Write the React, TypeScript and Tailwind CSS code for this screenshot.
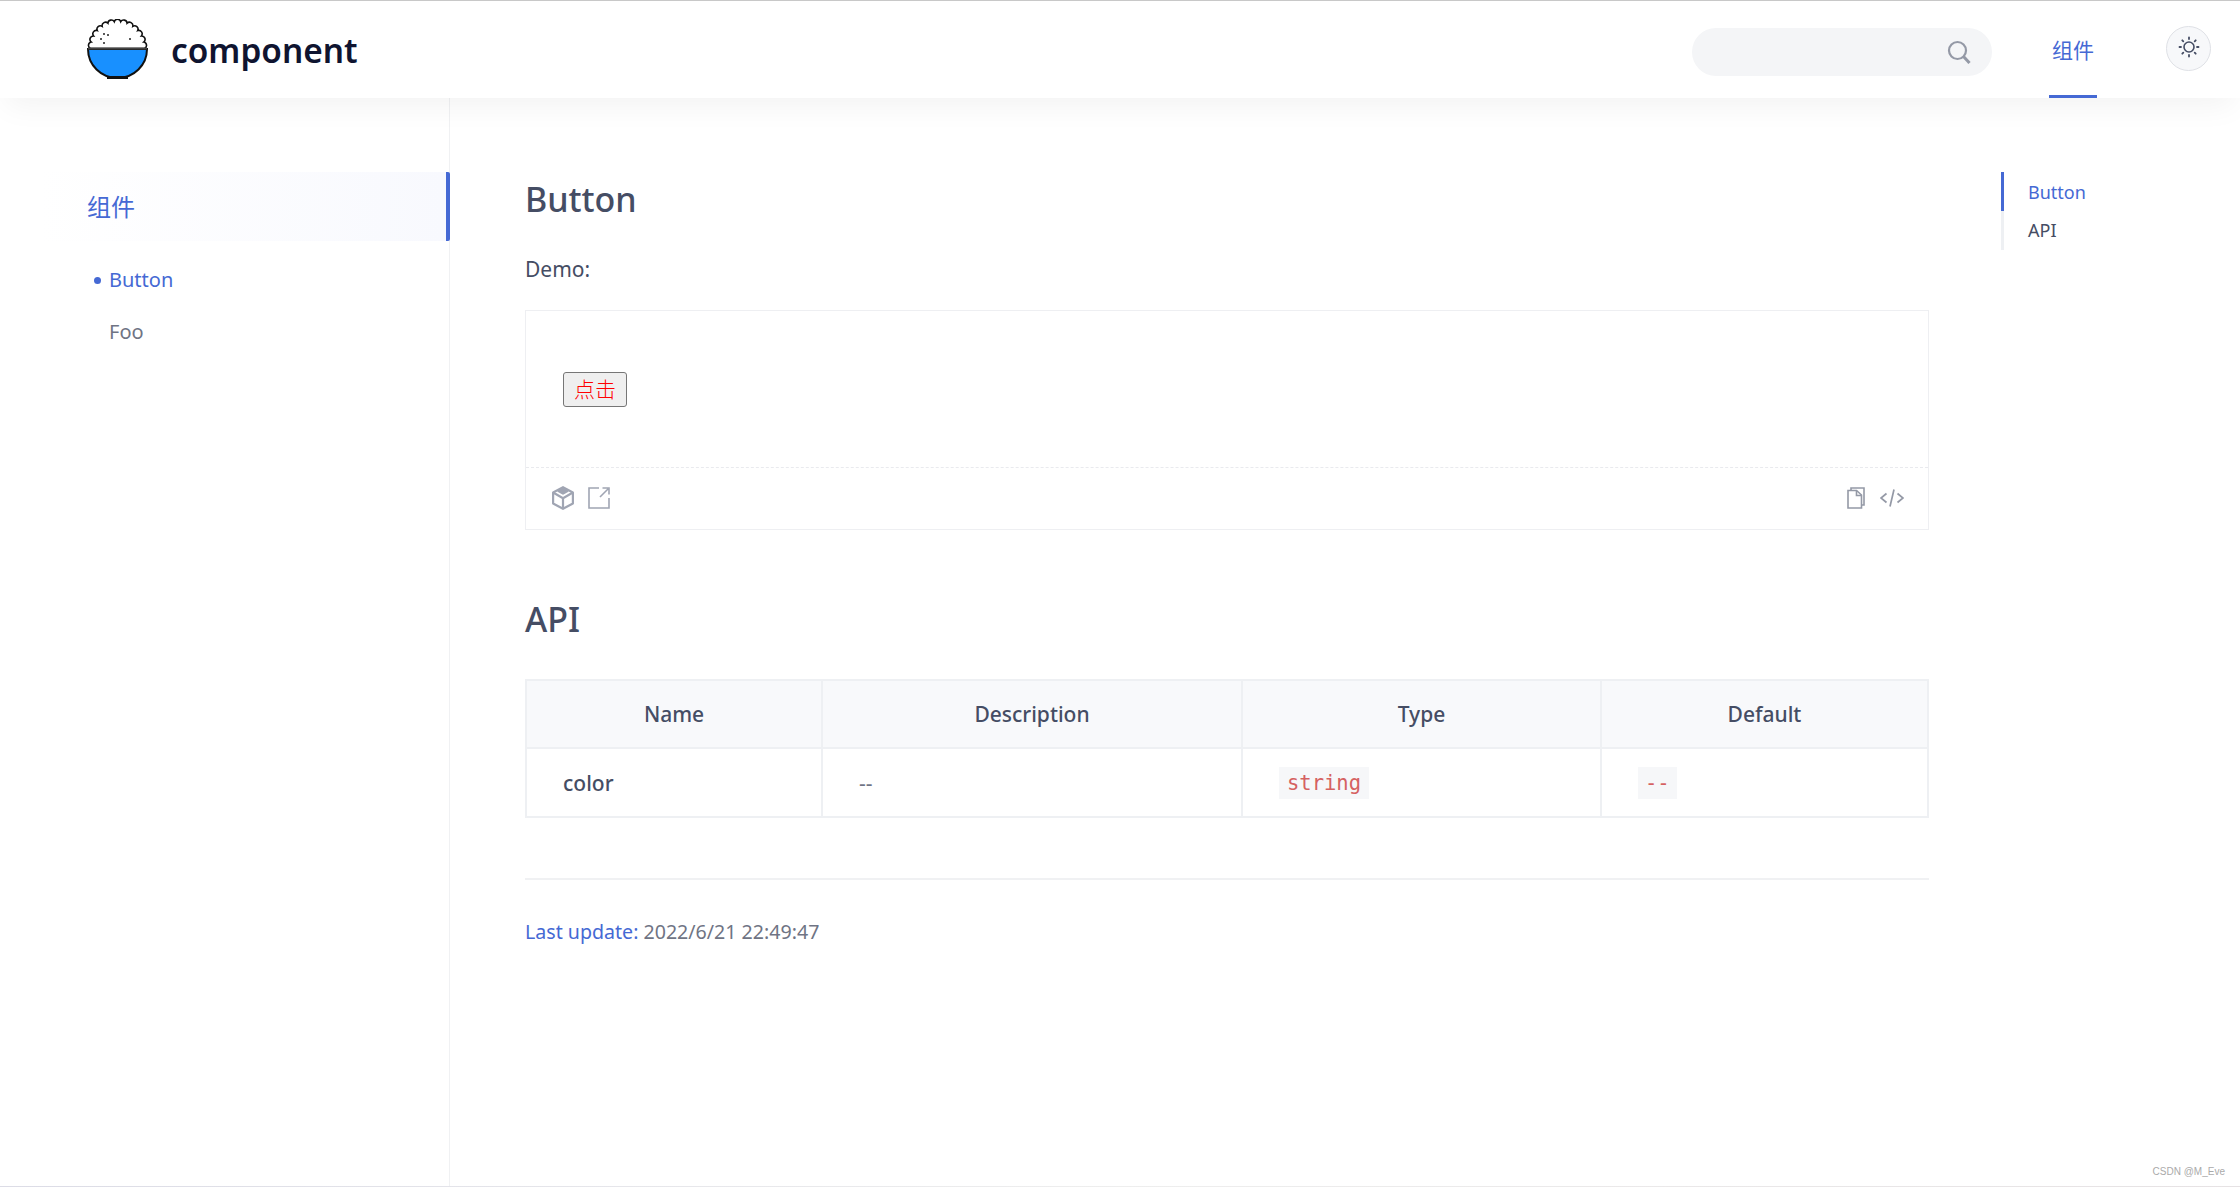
import React from 'react';

const FONT = "font-['Noto_Sans','Noto_Sans_CJK_SC',sans-serif]";

// scalloped rice outline for the logo
const ricePath = () => {
  const cx = 30.5;
  const cy = 29.5;
  const r = 27;
  const n = 13;
  let d = `M${cx - r} ${cy}`;
  for (let i = 1; i <= n; i++) {
    const a = Math.PI - (Math.PI * i) / n;
    const x = cx + r * Math.cos(a);
    const y = cy - r * Math.sin(a);
    d += ` A3.4 3.4 0 0 1 ${x.toFixed(2)} ${y.toFixed(2)}`;
  }
  return d + ' Z';
};

const Logo = () => (
  <svg width="61" height="61" viewBox="0 0 61 61" className="shrink-0">
    <path d={ricePath()} fill="#fff" stroke="#111" strokeWidth="1.6" />
    <path d="M1 30 H60 C60 46 47 59 30.5 59 C14 59 1 46 1 30 Z" fill="#1890ff" stroke="#111" strokeWidth="2" />
    <line x1="1" y1="29.5" x2="60" y2="29.5" stroke="#444" strokeWidth="2" />
    <rect x="20" y="57" width="21" height="3" fill="#111" />
    <circle cx="14" cy="20" r="1" fill="#222" />
    <circle cx="17" cy="15" r="1" fill="#222" />
    <circle cx="21" cy="16" r="1" fill="#222" />
    <circle cx="17" cy="24" r="1" fill="#222" />
    <circle cx="43" cy="20" r="1" fill="#222" />
  </svg>
);

const SearchIcon = () => (
  <svg width="24" height="24" viewBox="0 0 24 24" fill="none" stroke="#9499a6" strokeWidth="2.2">
    <circle cx="10.5" cy="10.5" r="8.5" />
    <path d="M16.5 16.5 L22.5 23" strokeWidth="3" />
  </svg>
);

const SunIcon = () => (
  <svg width="22" height="22" viewBox="0 0 22 22" fill="none" stroke="#454d64" strokeLinecap="round">
    <circle cx="11" cy="11" r="5" strokeWidth="1.6" />
    <path
      d="M11 1.5 V3 M11 19 V20.5 M1.5 11 H3 M19 11 H20.5 M4.3 4.3 L5.3 5.3 M16.7 16.7 L17.7 17.7 M4.3 17.7 L5.3 16.7 M16.7 5.3 L17.7 4.3"
      strokeWidth="1.8"
    />
  </svg>
);

const BoxIcon = () => (
  <svg width="22" height="24" viewBox="0 0 22 24" fill="none" stroke="#a0a5b3" strokeWidth="2.2" strokeLinejoin="round">
    <path d="M11 1.2 L20.9 6.5 V17.5 L11 22.8 L1.1 17.5 V6.5 Z" />
    <path d="M2 7 L11 12.2 L20 7 M11 12.2 V22" />
    <path d="M6.5 5 L11 2.2 L15.5 5 L11 7.6 Z" fill="#a0a5b3" />
  </svg>
);

const ExternalIcon = () => (
  <svg width="22" height="22" viewBox="0 0 22 22" fill="none" stroke="#a0a5b3" strokeWidth="1.6">
    <path d="M11 1 H1 V21 H21 V11" />
    <path d="M12 10 L20 2 M14.5 1 H21 V7.5" />
  </svg>
);

const CopyIcon = () => (
  <svg width="18" height="22" viewBox="0 0 18 22" fill="none" stroke="#9499a6" strokeWidth="1.6">
    <path d="M4 3 V1 H17 V18 H15" />
    <path d="M1 3.5 H9.5 L14.5 8 V21 H1 Z" fill="#fff" />
    <path d="M9.5 3.5 V8.5 H14.5" />
  </svg>
);

const CodeIcon = () => (
  <svg width="24" height="18" viewBox="0 0 24 18" fill="none" stroke="#9499a6" strokeWidth="1.7">
    <path d="M6.5 4.5 L1 9 L6.5 13.5 M17.5 4.5 L23 9 L17.5 13.5 M14 0.5 L10 17.5" />
  </svg>
);

const Header = () => (
  <header className="relative z-10 flex h-[98px] items-center border-t border-t-[#c8c8c8] bg-white pl-[87px] pr-[29px] shadow-[0_14px_30px_-6px_rgba(0,0,0,0.05)]">
    <Logo />
    <span className="ml-[23px] mt-[3px] text-[33.4px] font-semibold leading-none text-[#0f1430]">component</span>
    <div className="ml-auto flex h-full items-center">
      <div className="mt-[4px] flex h-[48px] w-[300px] items-center justify-end rounded-full bg-[#f4f5f7] pr-[21px]">
        <SearchIcon />
      </div>
      <nav className="ml-[57px] flex h-full w-[48px] items-center justify-center border-b-[3px] border-b-[#4569d4] pt-[6px] text-[21px] text-[#4569d4]">
        组件
      </nav>
      <button className="mb-[2px] ml-[69px] flex h-[45px] w-[45px] items-center justify-center rounded-full border border-[#dfe1e6] bg-[#f7f8fa] pb-[4px]">
        <SunIcon />
      </button>
    </div>
  </header>
);

const Sidebar = () => (
  <aside className="w-[450px] shrink-0 border-r border-r-[#f0f1f3] pt-[74px]">
    <div className="-mr-px ml-[40px] flex h-[69px] items-center rounded-r-[2px] border-r-4 border-r-[#4569d4] bg-gradient-to-r from-white to-[#f8f9fe] pl-[47px] text-[24px] text-[#4569d4]">
      组件
    </div>
    <ul className="mt-[13px] pl-[109px] text-[20px]">
      <li className="relative flex h-[52px] items-center text-[#4569d4]">
        <span className="absolute left-[-15px] top-[23px] h-[7px] w-[7px] rounded-full bg-[#4569d4]" />
        Button
      </li>
      <li className="flex h-[52px] items-center text-[#6f7484]">Foo</li>
    </ul>
  </aside>
);

const Demo = () => (
  <div className="mt-[26px] border border-[#eeeff2]">
    <div className="flex h-[157px] items-center border-b border-dashed border-b-[#e9eaee] pl-[37px]">
      <button className="flex h-[35px] w-[64px] items-center justify-center rounded-[3px] border border-[#767676] bg-[#efefef] pt-[1px] text-[21px] font-light leading-none text-[#ff0000]">
        点击
      </button>
    </div>
    <div className="flex h-[61px] items-center justify-between pb-[2px] pl-[26px] pr-[24px]">
      <div className="flex items-center gap-[14px]">
        <BoxIcon />
        <ExternalIcon />
      </div>
      <div className="flex items-center gap-[15px]">
        <CopyIcon />
        <CodeIcon />
      </div>
    </div>
  </div>
);

const ApiTable = () => (
  <table className="mt-[38px] w-[1404px] table-fixed border-collapse text-[21px] text-[#454d64]">
    <thead>
      <tr className="h-[68px] bg-[#f8f9fb]">
        <th className="w-[296px] border-2 border-[#eef0f3] pt-[2px] font-medium">Name</th>
        <th className="w-[420px] border-2 border-[#eef0f3] pt-[2px] font-medium">Description</th>
        <th className="w-[359px] border-2 border-[#eef0f3] pt-[2px] font-medium">Type</th>
        <th className="border-2 border-[#eef0f3] pt-[2px] font-medium">Default</th>
      </tr>
    </thead>
    <tbody>
      <tr className="h-[69px]">
        <td className="border-2 border-[#eef0f3] pl-[36px] pt-[2px] font-medium">color</td>
        <td className="border-2 border-[#eef0f3] pl-[36px] pt-[2px] text-[#6f7484]">--</td>
        <td className="border-2 border-[#eef0f3] pl-[36px]">
          <code className="inline-block h-[32px] bg-[#f6f7f9] px-[8px] font-['DejaVu_Sans_Mono',monospace] text-[20.5px] leading-[32px] text-[#d56161]">
            string
          </code>
        </td>
        <td className="border-2 border-[#eef0f3] pl-[36px]">
          <code className="inline-block h-[32px] bg-[#f6f7f9] px-[7px] font-['DejaVu_Sans_Mono',monospace] text-[20.5px] leading-[32px] text-[#d56161]">
            --
          </code>
        </td>
      </tr>
    </tbody>
  </table>
);

const Content = () => (
  <main className="ml-[75px] w-[1404px] shrink-0 pt-[79px]">
    <h1 className="text-[34px] font-medium leading-[44px] text-[#454d64]">Button</h1>
    <p className="mt-[33px] text-[21px] leading-[30px] text-[#454d64]">Demo:</p>
    <Demo />
    <h2 className="mt-[67px] text-[34px] font-medium leading-[44px] text-[#454d64]">API</h2>
    <ApiTable />
    <div className="mt-[60px] border-t-2 border-t-[#f0f1f3] pt-[37px] text-[19.6px] leading-[30px] text-[#6f7484]">
      <span className="text-[#4569d4]">Last update: </span>
      2022/6/21 22:49:47
    </div>
  </main>
);

const Toc = () => (
  <div className="ml-[72px] mt-[74px] h-[78px] w-[150px] border-l-[3px] border-l-[#eef0f3] text-[18px]">
    <div className="-ml-[3px] flex h-[39px] items-center border-l-[3px] border-l-[#4569d4] pl-[24px] pt-[1px] text-[#4569d4]">
      Button
    </div>
    <div className="flex h-[39px] items-center pl-[24px] text-[#454d64]">API</div>
  </div>
);

export default function App() {
  return (
    <div className={`relative flex h-[1187px] flex-col overflow-hidden bg-white ${FONT}`}>
      <Header />
      <div className="flex flex-1">
        <Sidebar />
        <Content />
        <Toc />
      </div>
      <span className="absolute bottom-[8px] right-[15px] font-['Liberation_Sans',sans-serif] text-[10px] text-[#aaaaaa]">
        CSDN @M_Eve
      </span>
      <div className="absolute bottom-0 left-0 h-px w-full bg-gradient-to-r from-[#dcdce6] via-[#eeeeee] to-[#e6e2e4]" />
    </div>
  );
}
